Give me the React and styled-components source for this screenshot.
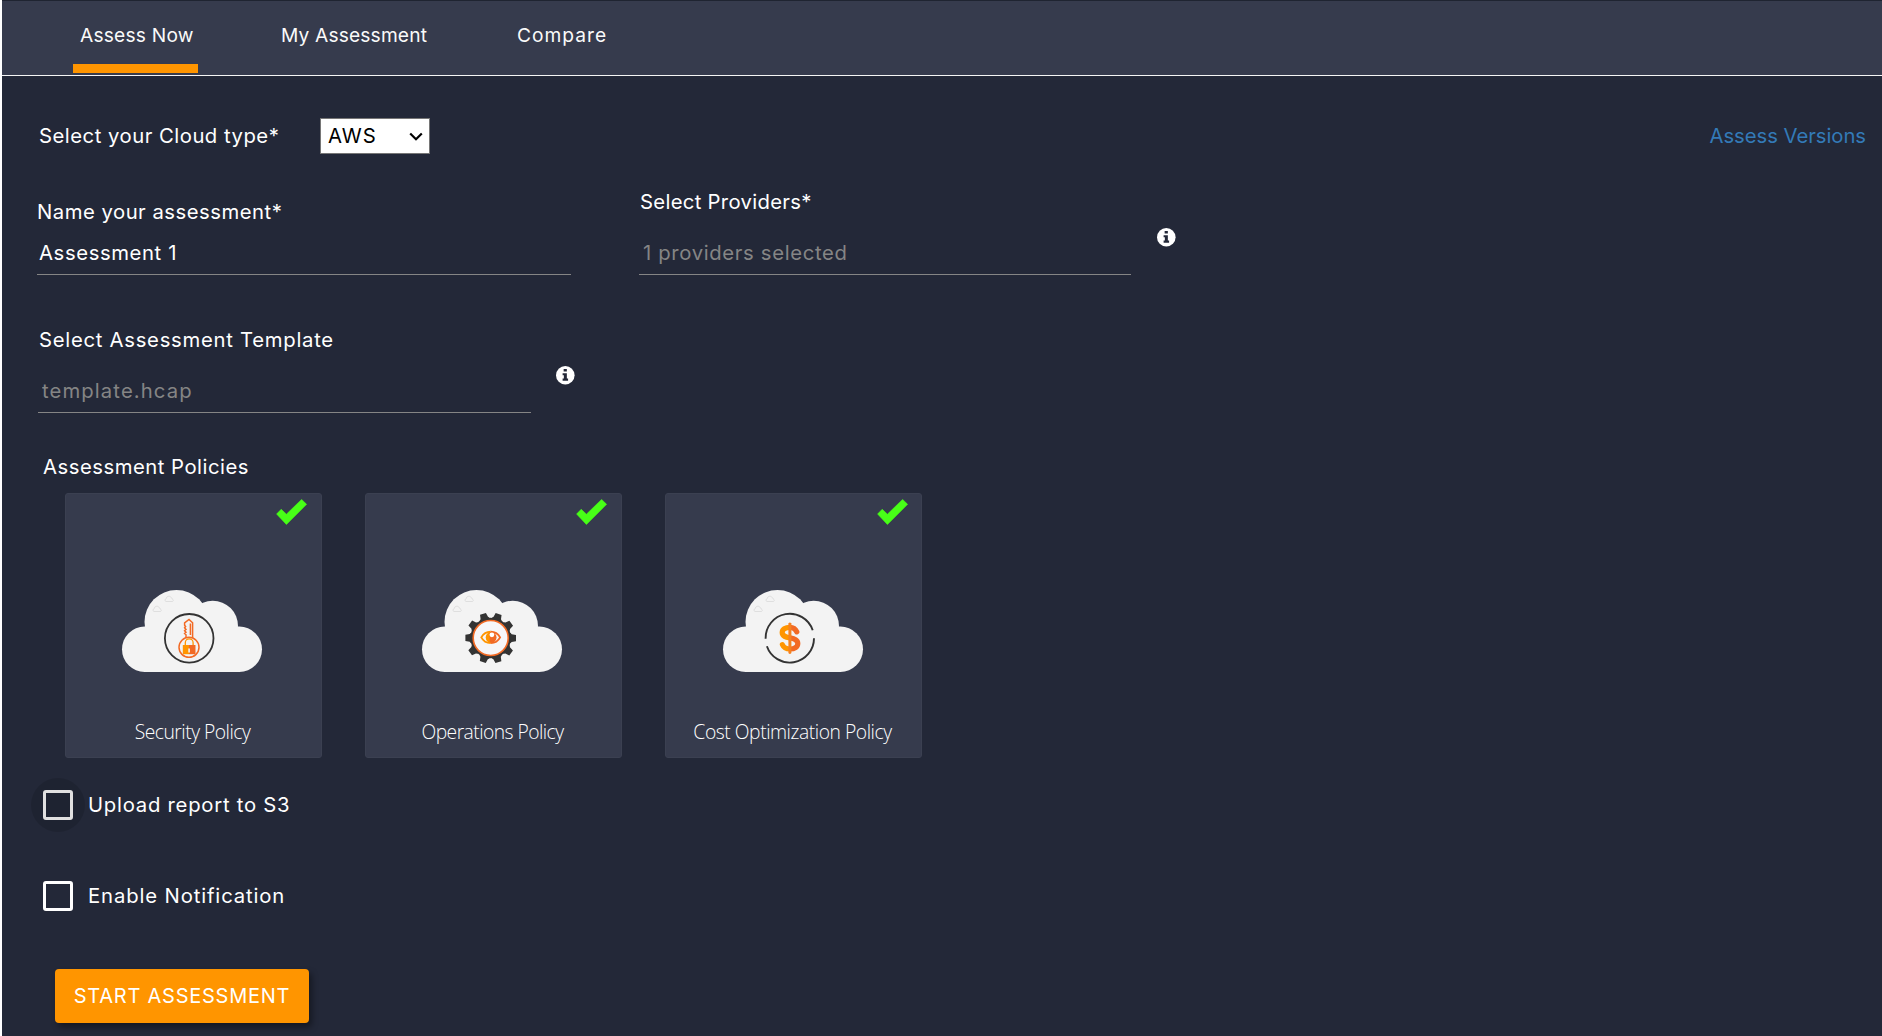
import React, { useState } from "react";
import styled, { createGlobalStyle } from "styled-components";

const GlobalStyle = createGlobalStyle`
  *, *::before, *::after { box-sizing: border-box; }
  body {
    margin: 0;
    background: #232838;
    font-family: Inter, "Open Sans", "Liberation Sans", sans-serif;
  }
`;

const Page = styled.div`
  display: flex;
  flex-direction: column;
  width: 100%;
  height: 1036px;
  overflow: hidden;
  border-left: 2px solid #fff;
  background: #232838;
  color: #fff;
`;

const TabBar = styled.nav`
  display: flex;
  flex: none;
  height: 76px;
  padding-left: 71px;
  background: #363b4d;
  border-top: 1px solid #1f2431;
  border-bottom: 1px solid #f5f5f5;
`;

const Tab = styled.button`
  display: flex;
  flex: none;
  align-items: flex-start;
  width: ${(p) => p.$width}px;
  height: 72px;
  margin: 0 ${(p) => p.$after || 0}px 0 0;
  padding: 22px 0 0 ${(p) => p.$inset || 0}px;
  border: 0;
  border-bottom: 9px solid ${(p) => (p.$active ? "#ff9500" : "transparent")};
  background: none;
  color: #fafafa;
  font: 400 19.2px/24px Inter, sans-serif;
  letter-spacing: ${(p) => p.$track}px;
  white-space: nowrap;
`;

const Content = styled.main`
  display: flex;
  flex-direction: column;
  padding: 42px 16px 0 35px;
`;

const TopRow = styled.div`
  display: flex;
  align-items: center;
  height: 36px;
`;

const Text = styled.span`
  font-size: 20.3px;
  font-weight: 400;
  line-height: 24px;
  letter-spacing: ${(p) => p.$track || 0}px;
  white-space: nowrap;
`;

const CloudLabel = styled(Text)`
  width: 283px;
  padding-left: 2px;
`;

const Select = styled.button`
  display: flex;
  align-items: center;
  justify-content: space-between;
  width: 110px;
  height: 36px;
  padding: 0 6px 0 7px;
  border: 1px solid #767676;
  background: #fff;
  color: #000;
  font: 400 20.3px/24px Inter, sans-serif;
  letter-spacing: 0.9px;
`;

const VersionsLink = styled(Text).attrs({ as: "a" })`
  margin-left: auto;
  color: #337ab7;
`;

const FieldRow = styled.div`
  display: flex;
  align-items: flex-end;
  height: ${(p) => p.$height}px;
`;

const Field = styled.label`
  display: flex;
  flex-direction: column;
  gap: ${(p) => p.$gap}px;
  width: ${(p) => p.$width}px;
  margin-left: ${(p) => p.$left || 0}px;
`;

const FieldLabel = styled(Text)`
  padding-left: ${(p) => p.$inset || 0}px;
`;

const Input = styled.input`
  width: 100%;
  height: 34px;
  padding: 0 0 10px ${(p) => p.$inset}px;
  border: 0;
  border-bottom: 1px solid #858585;
  outline: 0;
  background: transparent;
  color: #fff;
  font: 400 20.3px/23px Inter, sans-serif;
  letter-spacing: ${(p) => p.$track}px;
  &::placeholder { color: #858585; opacity: 1; }
`;

const InfoSvg = styled.svg`
  flex: none;
  width: 18.6px;
  height: 18.6px;
  margin: 0 0 28px ${(p) => p.$left}px;
`;

const SectionTitle = styled.h2`
  margin: 42px 0 14px 6px;
  font-size: 20.3px;
  font-weight: 400;
  line-height: 24px;
  letter-spacing: 0.5px;
`;

const Cards = styled.div`
  display: flex;
  gap: 43px;
  padding-left: 28px;
`;

const Card = styled.div`
  position: relative;
  display: flex;
  flex-direction: column;
  align-items: center;
  width: 257px;
  height: 265px;
  padding-top: 91px;
  border: 1px solid #3b4051;
  border-radius: 3px;
  background: #363b4d;
`;

const Tick = styled.svg`
  position: absolute;
  top: 5px;
  right: ${(p) => 14.5 - p.$shift}px;
  width: 31px;
  height: 26px;
`;

const Art = styled.svg`
  flex: none;
  width: 146px;
  height: 92px;
  margin-left: ${(p) => p.$shift * 2 - 1}px;
`;

const CardLabel = styled.span`
  margin: 43px 2px 0 0;
  color: #fff;
  font: 300 19.3px/24px "Open Sans", "Noto Sans", sans-serif;
  letter-spacing: ${(p) => p.$track}px;
  white-space: nowrap;
`;

const CheckRow = styled.label`
  display: flex;
  align-items: center;
  gap: 15px;
  height: 30px;
  margin: ${(p) => p.$top}px 0 0 6px;
`;

const Box = styled.span`
  position: relative;
  width: 30px;
  height: 30px;
  border: 3px solid #fff;
  border-radius: 3px;
  &::before {
    content: "";
    display: ${(p) => (p.$focused ? "block" : "none")};
    position: absolute;
    inset: -15px;
    border-radius: 50%;
    background: rgba(0, 0, 0, 0.12);
  }
`;

const StartButton = styled.button`
  align-self: flex-start;
  width: 254px;
  height: 54px;
  margin: 58px 0 0 18px;
  padding: 0;
  border: 0;
  border-radius: 4px;
  background: #ff9500;
  box-shadow: 3px 4px 6px rgba(0, 0, 0, 0.4);
  color: #fff;
  font: 400 20px/24px Inter, sans-serif;
  letter-spacing: 0.75px;
  white-space: nowrap;
`;

const DARK = "#333";
const AMBER = "#ff9500";
const RUST = "#f26a24";

function InfoIcon({ left }) {
  return (
    <InfoSvg viewBox="0 0 18 18" $left={left}>
      <circle cx="9" cy="9" r="9" fill="#fff" />
      <path fill="#232838" d="M7.4 3h3.1v2.4H7.4zM6.4 7h4.1v5.2h1.2v2.1H6.4v-2.1h1.2V9H6.4z" />
    </InfoSvg>
  );
}

function MiniCloud({ x, y }) {
  return (
    <path
      transform={`translate(${x} ${y})`}
      d="M1.6 5.5a1.5 1.5 0 0 1 .4-2.8A2.6 2.6 0 0 1 6.8 1.4a2 2 0 0 1 1.3 1.7 1.3 1.3 0 0 1 .3 2.4z"
      fill="none"
      stroke="#d9d9d9"
      strokeWidth=".8"
    />
  );
}

function KeyLock() {
  return (
    <g fill="none">
      <circle cx="69.2" cy="53.3" r="24.3" stroke={DARK} strokeWidth="1.8" />
      <circle cx="69" cy="62.3" r="10" stroke={RUST} strokeWidth="1.5" />
      <path
        d="M66 53V49.8l-1.4-1.3 1.4-1.3-1.4-1.4 1.4-1.4-1.4-1.6 1-1.3-1-1.3V37.8L69 34.4l3.6 3.4V53M70.4 38.5v11.5"
        stroke={RUST}
        strokeWidth="1.5"
      />
      <path d="M65.3 60v-2.3a3.9 3.9 0 0 1 7.8 0V60" fill="#f3f3f3" stroke={AMBER} strokeWidth="1.3" />
      <path d="M62.8 60H69v9.2h-6.2z" fill={AMBER} />
      <path d="M69 60h6.5v9.2H69z" fill={RUST} />
      <path d="M68.3 63.5h1.6v4h-1.6z" fill="#f3f3f3" />
    </g>
  );
}

function GearEye() {
  const teeth = Array.from({ length: 10 }, (_, i) => i * 36);
  return (
    <g transform="translate(70.7 53)">
      {teeth.map((a) => (
        <path key={a} transform={`rotate(${a})`} d="M17-5.2 20-5 21-3.8 25.3-3V3.2L21 4 20 5 17 5.2z" fill={DARK} />
      ))}
      <circle r="20.3" fill={DARK} />
      <circle r="17.5" fill="#f6f6f8" stroke={RUST} strokeWidth="1.6" />
      <g transform="translate(0 -.6)" strokeWidth="1.9">
        <path d="M0-5.6C-4-5.6-7.4-3.6-9.4 0-7.4 3.8-4 5.7 0 5.7" fill="none" stroke={AMBER} />
        <path d="M0-5.6C4-5.6 7.4-3.6 9.4 0 7.4 3.8 4 5.7 0 5.7" fill="none" stroke={RUST} />
        <path d="M.4-5.4a5.4 5.4 0 0 0 0 10.8z" fill={AMBER} />
        <path d="M-1-5.2a5.4 5.4 0 1 1 0 10.4z" fill={RUST} />
        <circle cx="1.2" cy="-2.6" r="2.4" fill="#fff" />
      </g>
    </g>
  );
}

function DollarRing() {
  return (
    <g fill="none" transform="translate(68.8 53)">
      <path d="M-24.2.7A24.2 24.2 0 0 1 22.9-7.8" stroke={DARK} strokeWidth="1.9" />
      <path d="M24.2.3A24.2 24.2 0 0 1-22.9 8.2" stroke={DARK} strokeWidth="1.9" />
      <defs>
        <linearGradient id="coin" gradientUnits="userSpaceOnUse" x1="-10" x2="10" y1="0" y2="0">
          <stop offset=".52" stopColor={AMBER} />
          <stop offset=".52" stopColor={RUST} />
        </linearGradient>
      </defs>
      <path
        d="M7-6.2C5.5-9.5 3.2-10.7.2-10.7-4.5-10.7-7.6-8.6-7.6-5.4-7.6-1.6-4-.9.3-.1 4.8.8 8 1.8 8 5.6 8 9 4.8 11 .3 11-3.6 11-6.2 9.6-7.4 6.6"
        stroke="url(#coin)"
        strokeWidth="5.2"
        strokeLinecap="round"
      />
      <path d="M-1.4-14.5q1.5-2 3 0v29.5q-1.5 2-3 0z" fill="#f58220" />
    </g>
  );
}

function PolicyCard({ name, track, shift = 0, children }) {
  return (
    <Card>
      <Tick viewBox="0 0 31 26" $shift={shift}>
        <path d="M.6 15 5.2 10.3 10.4 15.2 25.6.4 30.6 5.3 10.4 25.5z" fill="#48ff17" stroke="#48ff17" strokeWidth=".6" strokeLinejoin="round" />
      </Tick>
      <Art viewBox="0 0 146 92" $shift={shift}>
        <g fill="#f3f3f3">
          <circle cx="56.5" cy="37" r="32" />
          <circle cx="92.7" cy="41" r="25.3" />
          <rect x="2" y="41.5" width="140" height="45.5" rx="22.7" />
        </g>
        <MiniCloud x={44.2} y={11} />
        <MiniCloud x={32.2} y={21} />
        {children}
      </Art>
      <CardLabel $track={track}>{name}</CardLabel>
    </Card>
  );
}

export default function App() {
  const [name, setName] = useState("Assessment 1");
  return (
    <>
      <GlobalStyle />
      <Page>
        <TabBar>
          <Tab $active $width={125} $inset={7} $after={83} $track={0.2}>Assess Now</Tab>
          <Tab $width={147} $after={89} $track={0.15}>My Assessment</Tab>
          <Tab $width={95} $track={1}>Compare</Tab>
        </TabBar>
        <Content>
          <TopRow>
            <CloudLabel $track={0.5}>Select your Cloud type*</CloudLabel>
            <Select>
              AWS
              <svg width="14" height="9" viewBox="0 0 14 9">
                <path d="M1.2 1.5 7 7.2 12.8 1.5" fill="none" stroke="#000" strokeWidth="2.2" />
              </svg>
            </Select>
            <VersionsLink $track={-0.05}>Assess Versions</VersionsLink>
          </TopRow>
          <FieldRow $height={121}>
            <Field $width={534} $gap={17}>
              <FieldLabel $track={0.5}>Name your assessment*</FieldLabel>
              <Input $inset={2} $track={0.6} value={name} onChange={(e) => setName(e.target.value)} />
            </Field>
            <Field $width={492} $gap={27} $left={68}>
              <FieldLabel $inset={1} $track={0.3}>Select Providers*</FieldLabel>
              <Input $inset={4} $track={0.65} placeholder="1 providers selected" />
            </Field>
            <InfoIcon left={26} />
          </FieldRow>
          <FieldRow $height={138}>
            <Field $width={493} $gap={27} $left={1}>
              <FieldLabel $inset={1} $track={0.72}>Select Assessment Template</FieldLabel>
              <Input $inset={4} $track={1.1} placeholder="template.hcap" />
            </Field>
            <InfoIcon left={25} />
          </FieldRow>
          <SectionTitle>Assessment Policies</SectionTitle>
          <Cards>
            <PolicyCard name="Security Policy" track={-0.5}>
              <KeyLock />
            </PolicyCard>
            <PolicyCard name="Operations Policy" track={-0.55}>
              <GearEye />
            </PolicyCard>
            <PolicyCard name="Cost Optimization Policy" track={-0.45} shift={1}>
              <DollarRing />
            </PolicyCard>
          </Cards>
          <CheckRow $top={32}>
            <Box $focused />
            <Text $track={0.75}>Upload report to S3</Text>
          </CheckRow>
          <CheckRow $top={61}>
            <Box />
            <Text $track={0.87}>Enable Notification</Text>
          </CheckRow>
          <StartButton>START ASSESSMENT</StartButton>
        </Content>
      </Page>
    </>
  );
}
